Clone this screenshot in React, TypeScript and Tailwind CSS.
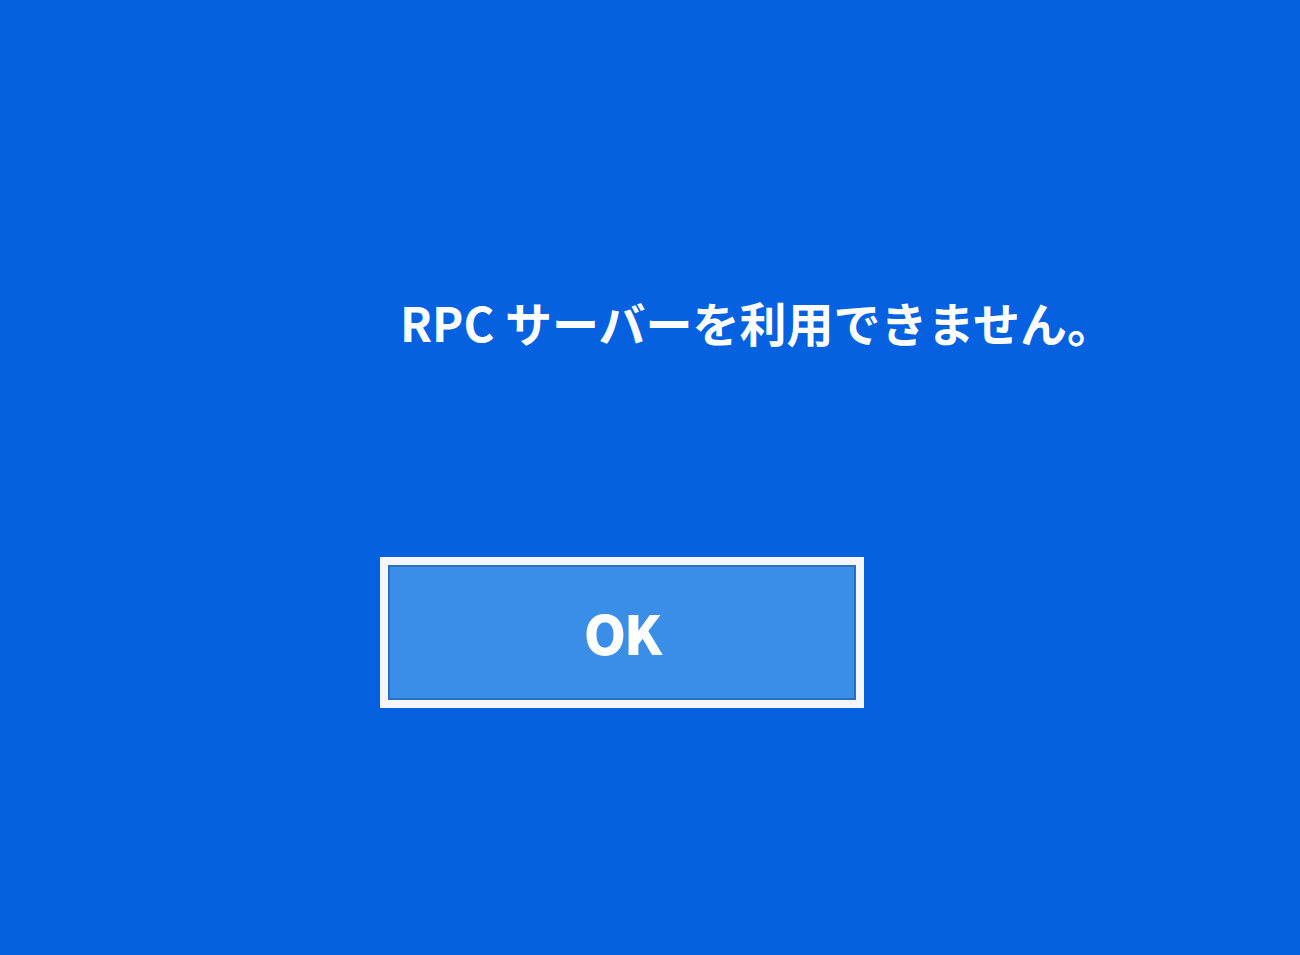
export default function App() {
    return (
        <div
            className="w-[1300px] h-[955px] bg-[#0561e0] flex flex-col pl-[380px] pt-[282px]"
            style={{ fontFamily: '"Noto Sans CJK JP", "Noto Sans", sans-serif' }}
        >
            <p className="pl-[20px] text-white font-bold text-[47px] leading-[80px] whitespace-nowrap">
                RPC サーバーを利用できません。
            </p>
            <button className="mt-[195px] w-[484px] h-[151px] border-[8px] border-[#f4f6fb] bg-[#3a8ee8] shadow-[inset_0_0_0_2px_#2a6fc0] flex items-center justify-center">
                <span className="text-white font-black text-[54px] leading-none tracking-[-2px] -mt-[2px]">OK</span>
            </button>
        </div>
    )
}
